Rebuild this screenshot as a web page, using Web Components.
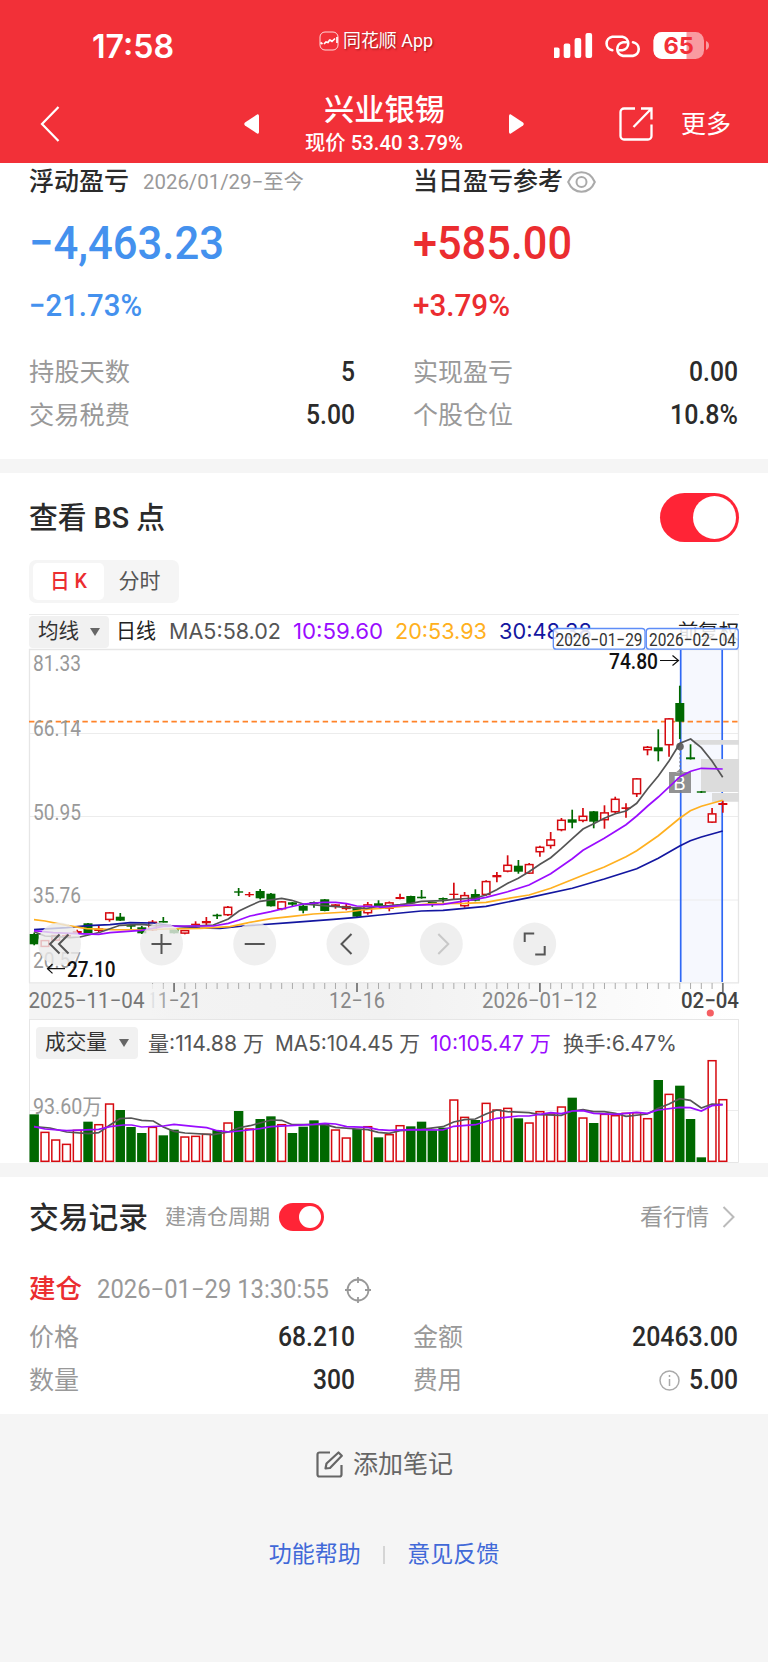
<!DOCTYPE html>
<html lang="zh-CN">
<head>
<meta charset="utf-8">
<title>兴业银锡</title>
<style>
    body {
        margin: 0;
        background: #f5f5f5;
        color: #2b2b2b;
        font-family: Roboto, "Noto Sans CJK SC", sans-serif;
    }
</style>
</head>
<body>
<x-stock-page></x-stock-page>

<script>
'use strict';

const define = (name, html, setup) => {
    customElements.define(name, class extends HTMLElement {
        connectedCallback() {
            if (this.shadowRoot) {
                return;
            }
            const shadow = this.attachShadow({mode: 'open'});
            shadow.innerHTML = html;
            if (setup) {
                setup(this, shadow);
            }
        }
    });
};

/* one line of text, stretched or narrowed to the width given in "w" */
define('x-text', /*html*/`
    <style>
    :host {
        display: block;
        flex: none;
        line-height: 1.2;
        white-space: nowrap;
    }
    span {
        display: inline-block;
        transform-origin: 0 50%;
    }
    </style>
    <span></span>
`, (el, shadow) => {
    const span = shadow.querySelector('span');
    const width = Number(el.getAttribute('w'));
    span.textContent = el.getAttribute('text');
    el.style.fontSize = el.getAttribute('size') + 'px';
    el.style.width = width + 'px';
    span.style.transform = `scaleX(${width / span.getBoundingClientRect().width})`;
});

define('x-switch', /*html*/`
    <style>
    :host {
        box-sizing: border-box;
        display: flex;
        flex: none;
        justify-content: flex-end;
        width: 79px;
        height: 49px;
        padding: 3px;
        border-radius: 25px;
        background: #ff2436;
    }
    :host([small]) {
        width: 45px;
        height: 28px;
    }
    i {
        height: 100%;
        aspect-ratio: 1;
        border-radius: 50%;
        background: #fff;
    }
    </style>
    <i></i>
`);

define('x-header', /*html*/`
    <style>
    :host {
        display: block;
        height: 163px;
        background: #f23038;
        color: #fff;
    }
    .status, .nav, .app {
        display: flex;
        align-items: center;
    }
    .status {
        height: 92px;
        padding-left: 92px;
    }
    .time {
        font-family: Inter;
        font-weight: 600;
        padding-top: 2px;
    }
    .app {
        margin: -11px 0 0 145px;
        gap: 4px;
        text-shadow: 1px 1px 2px rgba(90, 0, 0, .6);
    }
    .icons {
        margin-left: 121px;
    }
    .nav {
        height: 63px;
        padding-left: 40px;
    }
    .title {
        display: flex;
        flex-direction: column;
        align-items: center;
        margin: 0 46px;
        width: 158px;
        gap: 3px;
    }
    svg {
        display: block;
        flex: none;
    }
    </style>
    <div class="status">
        <x-text class="time" text="17:58" w="82" size="32"></x-text>
        <div class="app">
            <svg width="20" height="20" viewBox="0 0 20 20" fill="none" stroke="#ffd9d9">
                <rect x="1" y="1" width="18" height="18" rx="5"/>
                <path d="M1.500 11.500l2 1.500M5 13l2-2 2 .500 2-3M11 9l2 1.500 3-3M18 6v6" stroke="#fff" stroke-width="1.700"/>
            </svg>
            <x-text text="同花顺 App" w="90" size="18"></x-text>
        </div>
        <svg class="icons" width="160" height="30" viewBox="554 31 160 30">
            <g fill="#fff">
                <rect x="553" y="47.500" width="6.600" height="10.500" rx="2"/>
                <rect x="563.700" y="43.500" width="6.600" height="14.500" rx="2"/>
                <rect x="574.600" y="38" width="6.600" height="20" rx="2"/>
                <rect x="585.500" y="33" width="6.600" height="25" rx="2"/>
            </g>
            <g fill="none" stroke="#fff" stroke-width="2.600" stroke-linecap="round">
                <path d="M612.300 50.300a6.900 6.900 0 0 1 0-13.600H622.500a6.900 6.900 0 0 1 0 13.600h-3"/>
                <path d="M633 42.300a6.900 6.900 0 0 1 0 13.600H623a6.900 6.900 0 0 1 0-13.600h3"/>
            </g>
            <rect x="653.500" y="32" width="50.500" height="27" rx="8.500" fill="#f99ba0"/>
            <path d="M662 32h24.500v27H662a8.500 8.500 0 0 1-8.500-8.500v-10a8.500 8.500 0 0 1 8.500-8.500z" fill="#fff"/>
            <path d="M706 41c4 1.500 4 7.500 0 9z" fill="#f99ba0"/>
            <text x="663.500" y="54" textLength="30.500" lengthAdjust="spacingAndGlyphs" font-family="Inter" font-weight="700" font-size="23.500" fill="#f23038">65</text>
        </svg>
    </div>
    <div class="nav">
        <svg width="20" height="36" viewBox="0 0 20 36" fill="none" stroke="#fff" stroke-width="2.200"><path d="M18.500 1L2 18l16.500 17"/></svg>
        <svg style="margin-left:184px" width="15" height="20" viewBox="0 0 15 20" fill="#fff"><path d="M13.500.3Q15 0 15 2v16q0 2-1.500 1.700L1 11.500q-1.500-1.500 0-3z"/></svg>
        <div class="title">
            <x-text text="兴业银锡" w="121" size="30" style="font-weight:500"></x-text>
            <x-text text="现价 53.40 3.79%" w="158" size="20.500" style="font-weight:500"></x-text>
        </div>
        <svg width="15" height="20" viewBox="0 0 15 20" fill="#fff"><path d="M1.500.3Q0 0 0 2v16q0 2 1.500 1.700L14 11.500q1.500-1.500 0-3z"/></svg>
        <svg style="margin-left:95px" width="34" height="34" viewBox="0 0 34 34" fill="none" stroke="#fff" stroke-width="2.300"><path d="M16 1.500H5A3.500 3.500 0 0 0 1.500 5v24A3.500 3.500 0 0 0 5 32.500h24a3.500 3.500 0 0 0 3.500-3.500V17.500M22 1.500h10.500v11M32 2L14.500 20"/></svg>
        <x-text style="margin-left:28px;padding-top:3px" text="更多" w="50" size="25"></x-text>
    </div>
`);

/* label on the left, figure on the right */
define('x-row', /*html*/`
    <style>
    :host {
        display: flex;
        align-items: center;
        justify-content: space-between;
        height: 43px;
    }
    .label {
        color: #999;
    }
    .value {
        display: flex;
        align-items: center;
        gap: 9px;
        font-weight: 500;
    }
    </style>
    <x-text class="label" size="25"></x-text>
    <div class="value"><slot></slot><x-text size="27"></x-text></div>
`, (el, shadow) => {
    const [label, value] = shadow.querySelectorAll('x-text');
    for (const [node, text, w] of [[label, 'label', 'lw'], [value, 'value', 'vw']]) {
        const copy = node.cloneNode();
        copy.setAttribute('text', el.getAttribute(text));
        copy.setAttribute('w', el.getAttribute(w));
        node.replaceWith(copy);
    }
});

define('x-profit', /*html*/`
    <style>
    :host {
        box-sizing: border-box;
        display: grid;
        grid-template-columns: 326px 325px;
        column-gap: 58px;
        height: 296px;
        padding: 0 29px;
        background: #fff;
    }
    .head {
        display: flex;
        align-items: center;
        height: 37px;
    }
    .head x-text:first-child {
        font-weight: 500;
    }
    .big, .pct {
        display: flex;
        align-items: center;
        font-weight: 500;
    }
    .big {
        height: 87px;
    }
    .pct {
        height: 37px;
        margin-bottom: 27px;
    }
    .down {
        color: #4491ee;
    }
    .up {
        color: #eb2d30;
    }
    </style>
    <section>
        <div class="head">
            <x-text text="浮动盈亏" w="100" size="25"></x-text>
            <x-text style="margin-left:14px;color:#999" text="2026/01/29−至今" w="161" size="20"></x-text>
        </div>
        <div class="big down"><x-text text="−4,463.23" w="195" size="47"></x-text></div>
        <div class="pct down"><x-text text="−21.73%" w="113" size="31"></x-text></div>
        <x-row label="持股天数" lw="101" value="5" vw="14"></x-row>
        <x-row label="交易税费" lw="101" value="5.00" vw="49"></x-row>
    </section>
    <section>
        <div class="head">
            <x-text text="当日盈亏参考" w="150" size="25"></x-text>
            <svg style="margin-left:4px" width="29" height="22" viewBox="0 0 29 22" fill="none" stroke="#aaa" stroke-width="2"><path d="M1.200 11C4 4.500 8.500 1.200 14.500 1.200S25 4.500 27.800 11C25 17.500 20.500 20.800 14.500 20.800S4 17.500 1.200 11z"/><circle cx="14.500" cy="11" r="5"/></svg>
        </div>
        <div class="big up"><x-text text="+585.00" w="159" size="47"></x-text></div>
        <div class="pct up"><x-text text="+3.79%" w="97" size="31"></x-text></div>
        <x-row label="实现盈亏" lw="100" value="0.00" vw="49"></x-row>
        <x-row label="个股仓位" lw="100" value="10.8%" vw="68"></x-row>
    </section>
`);

define('x-tabs', /*html*/`
    <style>
    :host {
        box-sizing: border-box;
        display: flex;
        width: 150px;
        height: 43px;
        padding: 3px 4px;
        border-radius: 7px;
        background: #f5f5f5;
        color: #555;
    }
    div {
        display: flex;
        align-items: center;
        justify-content: center;
        width: 71px;
        border-radius: 5px;
    }
    .on {
        background: #fff;
        color: #eb2d30;
        font-weight: 500;
    }
    </style>
    <div class="on"><x-text text="日 K" w="37" size="21"></x-text></div>
    <div><x-text text="分时" w="42" size="21"></x-text></div>
`);

define('x-chip', /*html*/`
    <style>
    :host {
        box-sizing: border-box;
        display: flex;
        flex: none;
        align-items: center;
        justify-content: space-between;
        height: 32px;
        padding: 0 9px;
        border-radius: 4px;
        background: #f1f1f1;
        color: #333;
    }
    i {
        border: 5.500px solid transparent;
        border-top: 8px solid #666;
        border-bottom: 0;
    }
    </style>
    <slot></slot><i></i>
`);

/* ---- chart data: all heights are canvas y positions ---- */

const STEP = 10.76;
const X0 = 34.2;

// kind, body top, body bottom, high, low
const CANDLES = `g 934 944.3 932.700 945.300|r 940 947 940 947|r 935 940.700 935 940.700|r 935 936.700 934 937|r 931 933 929.700 933.500
g 923.300 933 923 933|r 928.300 931 925.300 932.700|r 912.300 920 912 921.700|g 916.700 920.700 913 921|g 924.700 926.700 924 929
g 927.300 933.300 926 934|r 921.700 930.300 920 931|g 921 922.700 917 923|g 928.300 933.300 928 933.500|r 930 933.700 930 934.300
r 923.700 925.300 921.300 926.700|r 921 923.300 917 925|g 914.700 916.300 913.700 919|r 906.700 915.300 906 916|g 891.300 892.700 888 896
r 894 895.300 892 897|g 891 898.300 889 899.300|g 893.700 906.300 893 906.500|r 901.300 909.300 901 910.300|g 902.300 904.700 902 906.700
g 905.700 910.700 905 913.300|g 902 904 901.500 907.700|g 899.300 911 899 911.300|r 904.300 906 904 908.700|r 906 909 904 910.300
g 907.300 916.700 907 918|r 904.300 913.300 902 914.700|g 903.300 906 900.300 906.300|r 902.300 908.700 901.500 911.300|r 897 899 893.700 899.300
g 896 903.300 895.700 903.500|g 896.700 898.300 890 898.700|g 902 903.700 901.700 906.700|g 898 899.700 897.500 902.700|r 893.700 895 882.700 899
r 895 906.300 892 907.700|g 894 900.700 889.300 901.300|r 881 895 880.300 895.700|r 875 877.300 872 882.300|r 864.700 871.700 855.300 872.300
g 865.700 871.700 860 873.700|r 864 873.700 863 874|r 846.700 852.300 845.700 856.700|r 839.300 846 832 848.700|r 819.700 830.300 818 831.300
g 819.300 822.700 809.700 828.300|r 815.700 821 808 822.300|g 811.300 821.700 811 828.300|r 812.300 820.300 805.300 828.700|r 798.700 812.300 796.700 813
r 807.300 809 803.300 817.700|r 778.300 794.300 778 797|r 746.700 750.300 746 755.300|g 747.300 751.300 729.300 761.300|r 718.300 745.300 718 756.700
g 703 721.700 685.700 739|g 757.300 759.300 744.300 759.500|g 791.300 792.700 791 793|r 813.300 822.700 808 823|r 803 805 800.700 812.700`
    .split(/[|\n]/).map(row => row.trim().split(' '));

const VOLUMES = ('g313 r365 r388 r401 r359 g335 r342 r280 g300 g351 g369 r350 g376 g359 r379 r377 r371 g360 r337 g303 r355 g327 g319 r342 g369 g350 '
    + 'g331 g341 r358 r382 g357 r348 g382 r372 r345 g349 g335 g361 g353 r268 r320 g330 r278 r298 r293 g325 r337 r303 r310 r289 g263 r322 g339 r311 '
    + 'r315 r308 r306 r324 g210 r251 g227 g327 g442 r150 r267').split(' ');

// point lists are kept at three units to the pixel, from the given origin
const trace = (ox, oy, list) => list.split(' ').map(p => {
    const [x, y] = p.split(',');
    return `${(ox + x / 3).toFixed(1)},${(oy + y / 3).toFixed(1)}`;
}).join(' ');

const MA = [
    ['#1316a0', trace(0, 820, '102,329 200,323 264,317 330,314 390,308 460,309 520,318 600,324 660,325 730,318 870,308 1000,298 1070,292'),
        trace(380, 780, '0,405 124,393 189,391 318,379 447,353 577,325 673,297 770,266 835,235 899,198 931,182 964,171 1028,153')],
    ['#ffb020', trace(0, 820, '102,299 135,303 200,316 260,326 340,329 425,330 500,327 600,325 690,320 750,307 813,296 870,290 940,282 1040,276 1100,268'),
        trace(380, 780, '0,385 60,380 157,371 254,370 318,367 350,361 447,345 512,325 609,286 673,261 738,230 770,212 835,167 899,115 931,92 964,79 1028,61')],
    ['#555', trace(0, 820, '102,335 135,348 170,350 210,353 240,351 300,337 360,316 425,313 460,317 500,318 555,320 640,315 685,297 717,273 750,257 780,244 845,235 875,241 910,252 970,257 1040,262 1100,265'),
        trace(380, 780, '0,378 28,377 60,374 92,370 124,364 189,362 221,358 286,354 318,345 350,329 383,310 415,295 447,275 480,253 512,233 544,206 577,176 609,147 641,131 673,115 706,101 738,93 770,70')
        + ' ' + trace(500, 600, '443,566 475,528 507,483 540,430 572,417 604,443 636,483 668,532')],
    ['#9a0cff', trace(0, 820, '102,332 160,338 230,341 296,343 330,338 425,331 490,319 555,318 640,318 685,310 717,300 750,288 813,275 870,261 910,252 970,247 1007,247 1040,251 1070,258 1135,260'),
        trace(380, 780, '0,382 60,377 157,374 189,373 221,368 286,358 318,352 383,335 447,315 512,281 577,236 609,211 673,175 738,134 770,108')
        + ' ' + trace(500, 600, '443,618 475,591 540,530 572,514 604,505 668,507')],
];

const VOLUME_MA = [
    ['#555', trace(0, 1010, '102,350 150,354 200,366 265,371 296,368 330,345 360,326 393,324 425,331 460,333 490,351 522,364 555,369 640,374 685,366 717,353 750,347 813,330 845,331 877,344 975,344 1007,352 1070,357 1103,359 1135,367'),
        trace(380, 1010, '28,370 60,362 124,358 189,350 221,336 254,329 286,327 318,312 350,300 383,305 447,308 480,314 544,316 577,303 609,299 641,305 673,305 706,310 738,319 802,312 835,295 867,282 899,266 931,271 964,294 996,282 1028,284')],
    ['#9a0cff', trace(0, 1010, '102,350 135,357 200,362 296,358 330,350 370,345 395,345 425,351 490,348 522,343 587,350 620,353 652,362 690,366 780,356 813,350 940,343 975,340 1007,342 1040,350 1103,352 1135,359'),
        trace(380, 1010, '28,361 92,359 189,360 221,349 286,344 350,325 415,318 447,318 512,308 544,311 577,303 609,302 641,310 706,313 770,307 802,310 835,300 899,292 931,293 964,303 996,287 1028,284')],
];

const lines = list => list.map(([color, a, b]) =>
    `<polyline points="${a} ${b}" fill="none" stroke="${color}" stroke-width="1.700"/>`).join('');

const label = (x, y, w, text, attrs = 'fill="#999"') =>
    `<text x="${x}" y="${y}" textLength="${w}" lengthAdjust="spacingAndGlyphs" font-size="21.500" ${attrs}>${text}</text>`;

const candle = ([kind, top, bottom, high, low], i) => {
    const x = X0 + i * STEP;
    const color = kind === 'g' ? '#006800' : '#d60a10';
    const h = bottom - top;
    const body = kind === 'g' || h < 3
        ? `<rect x="${x - 4.5}" y="${top}" width="9" height="${h}" fill="${color}"/>`
        : `<rect x="${x - 3.8}" y="${+top + .6}" width="7.600" height="${h - 1.2}" fill="#fff" stroke="${color}" stroke-width="1.500"/>`;
    return `<path d="M${x} ${high}V${low}" stroke="${color}" stroke-width="1.700"/>${body}`;
};

const bar = (item, i) => {
    const x = X0 + i * STEP;
    const y = 1010 + item.slice(1) / 3;
    return item[0] === 'g'
        ? `<rect x="${x - 4.7}" y="${y}" width="9.400" height="${1162 - y}" fill="#006800"/>`
        : `<rect x="${x - 3.9}" y="${y + .7}" width="7.800" height="${1160.6 - y}" fill="#fff" stroke="#d60a10" stroke-width="1.500"/>`;
};

const ticks = () => {
    let out = '';
    for (let i = 11; i <= 64; i++) {
        const major = (i - 13) % 17 === 0;
        out += `<path d="M${X0 + i * STEP} 983v${major ? 9 : 6}" stroke="${major ? '#777' : '#aaa'}" stroke-width="${major ? 1.8 : 1}"/>`;
    }
    return out;
};

const button = (x, path, stroke = '#555') =>
    `<circle cx="${x}" cy="944" r="21.500" fill="#ebebeb" fill-opacity=".8"/><path transform="translate(${x} 944)" d="${path}" fill="none" stroke="${stroke}" stroke-width="2"/>`;

define('x-kline', /*html*/`
    <style>
    :host {
        display: block;
    }
    .bar {
        box-sizing: border-box;
        display: flex;
        align-items: center;
        height: 35px;
        margin: 0 29px;
        border-top: 1px solid #ececec;
        color: #555;
    }
    svg {
        display: block;
        position: relative;
        overflow: visible;
    }
    </style>
    <div class="bar">
        <x-chip style="width:80px"><x-text text="均线" w="41" size="21"></x-text></x-chip>
        <x-text style="margin-left:7px;color:#222" text="日线" w="40" size="21"></x-text>
        <x-text style="margin-left:13px;font-family:Inter" text="MA5:58.02" w="112" size="21.500"></x-text>
        <x-text style="margin-left:12px;font-family:Inter;color:#9a0cff" text="10:59.60" w="90" size="21.500"></x-text>
        <x-text style="margin-left:12px;font-family:Inter;color:#ffb020" text="20:53.93" w="92" size="21.500"></x-text>
        <x-text style="margin-left:12px;font-family:Inter;color:#1316a0" text="30:48.38" w="93" size="21.500"></x-text>
        <x-text style="margin-left:86px;color:#222" text="前复权" w="61" size="20"></x-text>
    </div>
    <svg width="768" height="370" viewBox="0 649 768 370">
        <defs>
            <linearGradient id="strip" x1="0" x2="1" y1="0" y2="0">
                <stop offset="0" stop-color="#f4f4f4"/><stop offset=".5" stop-color="#f1f1f1"/><stop offset="1" stop-color="#fff"/>
            </linearGradient>
            <linearGradient id="fade" x1="0" x2="1" y1="0" y2="0">
                <stop offset=".86" stop-color="#f4f4f4"/><stop offset="1" stop-color="#f4f4f4" stop-opacity="0"/>
            </linearGradient>
        </defs>
        <rect x="680.500" y="650" width="42" height="332" fill="#f6f8fe"/>
        <path d="M29 733.500h710M29 816.500h710M29 900h710" stroke="#ececec"/>
        <path d="M29 649.500h710M29 983h710M29.500 649v334M738.500 649v334" stroke="#e6e6e6" stroke-width="1.300"/>
        <path d="M29 721.700h710" stroke="#ff8329" stroke-width="1.800" stroke-dasharray="5.400 3.500"/>
        ${label(33, 671, 48, '81.33')}
        ${label(33, 736, 48, '66.14')}
        ${label(33, 819.5, 48, '50.95')}
        ${label(33, 903, 48, '35.76')}
        ${label(33, 968, 48, '20.57')}
        <path d="M680.700 650v332M722.200 650v332" stroke="#2f68f5" stroke-width="1.700"/>
        <path d="M694 740h45v4.700h-45zM701 759h38v33h-38zM712 793h27v8.700h-27z" fill="#dcdcdc"/>
        ${CANDLES.map(candle).join('')}
        <path d="M680 769l-4 3.200h8zM669 772h22v21h-22z" fill="#808080" fill-opacity=".86"/>
        <path d="M680 749v21" stroke="#777" stroke-dasharray="2 2"/>
        <circle cx="680" cy="746.500" r="3.800" fill="#666"/>
        <text x="673.300" y="790" font-family="Inter" font-size="19" fill="#fff">B</text>
        ${lines(MA)}
        ${label(609, 669, 49, '74.80', 'fill="#111" font-weight="500"')}
        <path d="M660 660.500h18M672.500 655.500l6 5-6 5" fill="none" stroke="#111" stroke-width="1.200"/>
        <g fill="#fff" fill-opacity=".86" stroke="#5e8df7" stroke-width="1.300">
            <rect x="553.300" y="628.500" width="91.700" height="20.700" rx="3"/>
            <rect x="646.300" y="628.500" width="92" height="20.700" rx="3"/>
        </g>
        <text x="555.500" y="645.500" textLength="87" lengthAdjust="spacingAndGlyphs" font-size="18.500" fill="#333">2026−01−29</text>
        <text x="649" y="645.500" textLength="87" lengthAdjust="spacingAndGlyphs" font-size="18.500" fill="#333">2026−02−04</text>
        ${button(59.5, 'M0-9.500l-9.500 9.500 9.500 9.500M9-9.500l-9.500 9.500 9.500 9.500')}
        ${button(161.5, 'M-10 0h20M0-10v20')}
        ${button(254.7, 'M-10 0h20')}
        ${button(348, 'M3.500-10l-10 10 10 10')}
        ${button(441.3, 'M-3-10l10 10-10 10', '#c8c8c8')}
        ${button(534.7, 'M-10-2v-8.500h9.500M10 2v8.500h-9.500')}
        <path d="M47 968.700h18M52.500 964l-5 4.700 5 4.700" fill="none" stroke="#111" stroke-width="1.200"/>
        ${label(67, 977, 48.5, '27.10', 'fill="#111" font-weight="500"')}
        <rect x="29" y="983.700" width="710" height="35.300" fill="url(#strip)"/>
        ${ticks()}
        ${label(147, 1008, 54, '11−21', 'fill="#888"')}
        <rect x="29" y="984" width="140" height="34" fill="url(#fade)"/>
        ${label(28.5, 1008, 116, '2025−11−04', 'fill="#777"')}
        ${label(329, 1008, 56, '12−16', 'fill="#888"')}
        ${label(482, 1008, 115, '2026−01−12', 'fill="#888"')}
        ${label(681, 1008, 58, '02−04', 'fill="#444" font-weight="500"')}
        <circle cx="710.300" cy="1013" r="3.600" fill="#f55f63"/>
    </svg>
`);

define('x-volume', /*html*/`
    <style>
    :host {
        box-sizing: border-box;
        display: block;
        height: 144px;
    }
    .bar {
        box-sizing: border-box;
        display: flex;
        align-items: center;
        height: 44px;
        margin: 0 29px;
        padding: 3px 0 0 6px;
        border: 1px solid #e6e6e6;
        border-bottom: 0;
        color: #555;
    }
    .bar > x-text {
        padding-top: 2px;
        font-family: Inter, "Noto Sans CJK SC";
    }
    svg {
        display: block;
    }
    </style>
    <div class="bar">
        <x-chip style="width:102px"><x-text text="成交量" w="62" size="21"></x-text></x-chip>
        <x-text style="margin-left:10px" text="量:114.88 万" w="116" size="21"></x-text>
        <x-text style="margin-left:11px" text="MA5:104.45 万" w="145" size="21"></x-text>
        <x-text style="margin-left:10px;color:#9a0cff" text="10:105.47 万" w="121" size="21"></x-text>
        <x-text style="margin-left:12px" text="换手:6.47%" w="114" size="21"></x-text>
    </div>
    <svg width="768" height="100" viewBox="0 1063 768 100" overflow="visible">
        <path d="M29 1110.500h710" stroke="#ececec"/>
        <path d="M29.500 1063v99.500h709V1063" fill="none" stroke="#e6e6e6"/>
        ${label(33, 1114, 69, '93.60万')}
        ${VOLUMES.map(bar).join('')}
        ${lines(VOLUME_MA)}
    </svg>
`);

define('x-records', /*html*/`
    <style>
    :host {
        box-sizing: border-box;
        display: block;
        height: 237px;
        padding: 0 29px;
        background: #fff;
    }
    .head, .trade {
        display: flex;
        align-items: center;
        color: #999;
    }
    .head {
        height: 80px;
    }
    .head x-text {
        padding-top: 1px;
    }
    .trade {
        height: 65px;
    }
    .grid {
        display: grid;
        grid-template-columns: 326px 325px;
        column-gap: 58px;
        margin-top: -6px;
    }
    </style>
    <div class="head">
        <x-text style="color:#2b2b2b;font-weight:500" text="交易记录" w="119" size="30"></x-text>
        <x-text style="margin-left:17px" text="建清仓周期" w="105" size="21"></x-text>
        <x-switch small style="margin-left:9px"></x-switch>
        <x-text style="margin-left:316px" text="看行情" w="69" size="23"></x-text>
        <svg style="margin-left:13px" width="13" height="22" viewBox="0 0 13 22" fill="none" stroke="#bbb" stroke-width="2"><path d="M1.500 1l10 10-10 10"/></svg>
    </div>
    <div class="trade">
        <x-text style="color:#eb2d30;font-weight:500" text="建仓" w="53" size="26"></x-text>
        <x-text style="margin-left:15px" text="2026−01−29 13:30:55" w="232" size="25"></x-text>
        <svg style="margin-left:16px" width="26" height="26" viewBox="0 0 26 26" fill="none" stroke="#999" stroke-width="1.800"><circle cx="13" cy="13" r="10.500"/><path d="M13 0v6M13 20v6M0 13h6M20 13h6"/></svg>
    </div>
    <div class="grid">
        <x-row label="价格" lw="50" value="68.210" vw="77"></x-row>
        <x-row label="金额" lw="50" value="20463.00" vw="106"></x-row>
        <x-row label="数量" lw="50" value="300" vw="42"></x-row>
        <x-row label="费用" lw="49" value="5.00" vw="49">
            <svg width="21" height="21" viewBox="0 0 21 21" fill="none" stroke="#aaa" stroke-width="1.500"><circle cx="10.500" cy="10.500" r="9.500"/><path d="M10.500 9v7M10.500 5v2"/></svg>
        </x-row>
    </div>
`);

define('x-footer', /*html*/`
    <style>
    :host {
        display: block;
        height: 248px;
    }
    div {
        display: flex;
        align-items: center;
        justify-content: center;
    }
    .note {
        height: 100px;
        gap: 10px;
        color: #666;
    }
    .links {
        height: 81px;
        gap: 22.500px;
        color: #4169d8;
    }
    x-text {
        padding-top: 1px;
    }
    i {
        width: 1.500px;
        height: 18px;
        background: #d5d5d5;
    }
    </style>
    <div class="note">
        <svg width="27" height="27" viewBox="0 0 27 27" fill="none" stroke="#666" stroke-width="2.200" stroke-linejoin="round"><path d="M14 1.500H3.500a2 2 0 0 0-2 2v20a2 2 0 0 0 2 2h20a2 2 0 0 0 2-2V14"/><path d="M9.500 17.500l1-5L22.500 1.500l3.300 3.300L14 17z"/></svg>
        <x-text text="添加笔记" w="100" size="25"></x-text>
    </div>
    <div class="links">
        <x-text text="功能帮助" w="92" size="23"></x-text>
        <i></i>
        <x-text text="意见反馈" w="92" size="23"></x-text>
    </div>
`);

define('x-stock-page', /*html*/`
    <style>
    :host {
        display: block;
        width: 768px;
        height: 1662px;
        overflow: hidden;
    }
    .chart {
        margin-top: 14px;
        height: 690px;
        background: #fff;
    }
    .head {
        display: flex;
        align-items: center;
        justify-content: space-between;
        height: 87px;
        padding: 2px 29px 0 29px;
        box-sizing: border-box;
        font-weight: 500;
    }
    x-tabs {
        margin: 0 0 11px 29px;
    }
    x-records {
        margin-top: 14px;
    }
    </style>
    <x-header></x-header>
    <x-profit></x-profit>
    <div class="chart">
        <div class="head">
            <x-text text="查看 BS 点" w="136" size="30"></x-text>
            <x-switch></x-switch>
        </div>
        <x-tabs></x-tabs>
        <x-kline></x-kline>
        <x-volume></x-volume>
    </div>
    <x-records></x-records>
    <x-footer></x-footer>
`);
</script>
</body>
</html>
